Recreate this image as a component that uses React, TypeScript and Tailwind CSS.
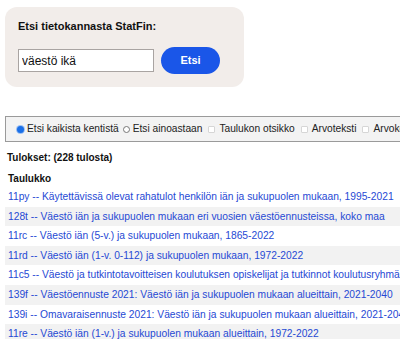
const rows = [
  { id: '11py', title: 'Käytettävissä olevat rahatulot henkilön iän ja sukupuolen mukaan, 1995-2021' },
  { id: '128t', title: 'Väestö iän ja sukupuolen mukaan eri vuosien väestöennusteissa, koko maa' },
  { id: '11rc', title: 'Väestö iän (5-v.) ja sukupuolen mukaan, 1865-2022' },
  { id: '11rd', title: 'Väestö iän (1-v. 0-112) ja sukupuolen mukaan, 1972-2022' },
  { id: '11c5', title: 'Väestö ja tutkintotavoitteisen koulutuksen opiskelijat ja tutkinnot koulutusryhmän mukaan' },
  { id: '139f', title: 'Väestöennuste 2021: Väestö iän ja sukupuolen mukaan alueittain, 2021-2040' },
  { id: '139i', title: 'Omavaraisennuste 2021: Väestö iän ja sukupuolen mukaan alueittain, 2021-2040' },
  { id: '11re', title: 'Väestö iän (1-v.) ja sukupuolen mukaan alueittain, 1972-2022' },
]

function Check() {
  return <span className="shrink-0 inline-block w-[7px] h-[7px] border border-[#d6d6d6] rounded-[1px] bg-white mr-[4px]" />
}

export default function App() {
  return (
    <div className="w-[400px] h-[339px] overflow-hidden bg-white font-['Liberation_Sans',Arial,sans-serif] text-[#111]">
      <div className="px-[5px] pt-[7px]">
        <div className="w-[239px] h-[80px] rounded-[12px] bg-[#f2edea] px-[13px] pt-[12px]">
          <div className="text-[11px] font-bold leading-[15px]">Etsi tietokannasta StatFin:</div>
          <div className="flex items-center gap-[7px] mt-[13px]">
            <input readOnly value="väestö ikä" className="w-[136px] h-[23px] border border-[#a9a4a2] bg-white px-[3px] text-[12px] outline-none" />
            <button className="w-[59px] h-[27px] rounded-full bg-[#1a56e8] text-white text-[11px] font-bold">Etsi</button>
          </div>
        </div>
      </div>

      <div className="pl-[5px] mt-[29px]">
        <div className="h-[26px] w-[420px] border border-[#9a9a9a] bg-[#f3f3f3] flex items-center pl-[11px] text-[10.2px] whitespace-nowrap text-[#222]">
          <span className="shrink-0 inline-block w-[7px] h-[7px] rounded-full bg-[#1a6fe8] ring-1 ring-[#9cc0f2] mr-[3px]" />
          <span className="mr-[4px]">Etsi kaikista kentistä</span>
          <span className="shrink-0 inline-block w-[7px] h-[7px] rounded-full border border-[#777] bg-white mr-[3px]" />
          <span className="mr-[6px]">Etsi ainoastaan</span>
          <Check />
          <span className="mr-[6px]">Taulukon otsikko</span>
          <Check />
          <span className="mr-[6px]">Arvoteksti</span>
          <Check />
          <span>Arvokoodi</span>
        </div>
      </div>

      <div className="pl-[7px] mt-[9px] text-[10px] font-bold leading-[14px]">Tulokset: (228 tulosta)</div>
      <div className="pl-[8px] mt-[7px] text-[10px] font-bold leading-[14px]">Taulukko</div>

      <div className="pl-[5px] mt-[1px]">
        {rows.map((r, i) => (
          <div key={r.id} className={`h-[19.6px] flex items-center pl-[3px] whitespace-nowrap text-[10.25px] text-[#2649d4] ${i % 2 === 1 ? 'bg-[#f2f2f2]' : 'bg-white'}`}>
            {r.id} -- {r.title}
          </div>
        ))}
      </div>
    </div>
  )
}
